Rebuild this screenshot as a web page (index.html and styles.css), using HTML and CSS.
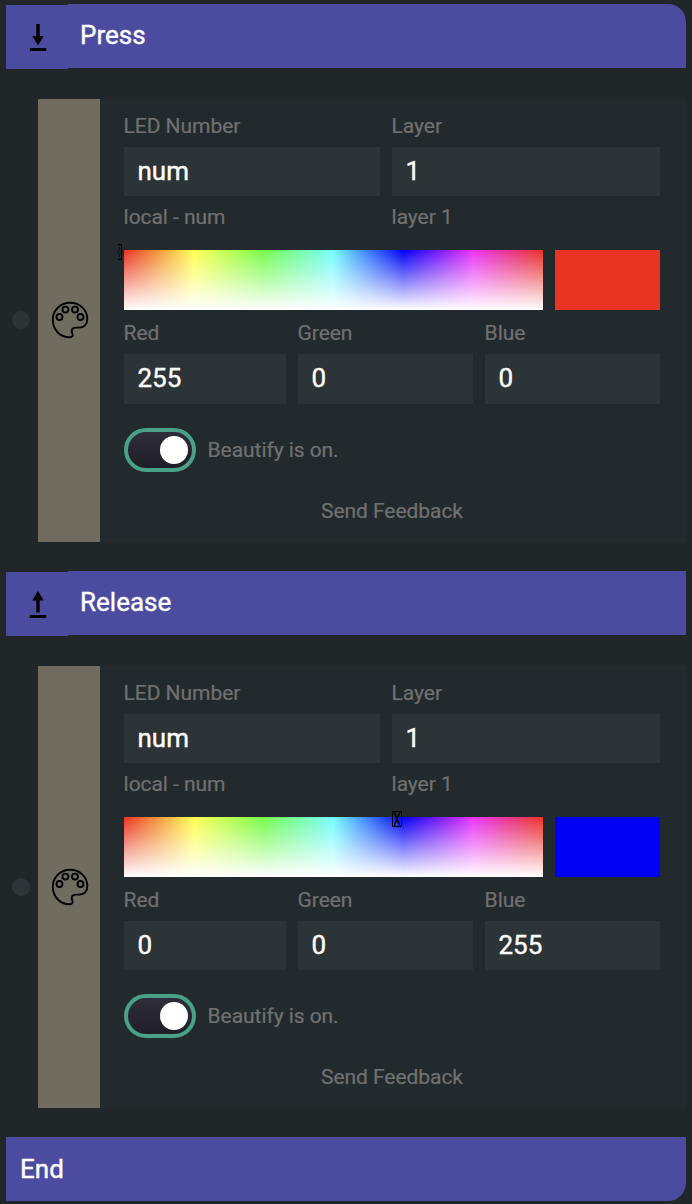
FILE: index.html
```html
<!DOCTYPE html>
<html lang="en">
<head>
<meta charset="utf-8">
<title>Actions</title>
<link rel="stylesheet" href="styles.css">
</head>
<body>
<svg class="defs" width="0" height="0">
  <symbol id="palette" viewBox="0 0 38 38">
    <g fill="none" stroke="#000" stroke-width="1.9">
      <path d="M19 1.800C9.400 1.800 1.800 9.300 1.800 18.500C1.800 28.800 9 36.300 18.500 36.300C21.300 36.300 22.300 34.900 21.200 32.200C19.800 28.800 21.200 26.600 25 26.600H27.500C33.200 26.600 36.300 23.500 36.300 18C36.300 8.500 28.800 1.800 19 1.800Z"/>
      <circle cx="8.500" cy="16" r="3"/><circle cx="14.400" cy="8.600" r="3"/>
      <circle cx="24" cy="8.600" r="3"/><circle cx="29.500" cy="16" r="3"/>
    </g>
  </symbol>
</svg>
<main class="sequence">
  <header class="event event-first">
    <div class="event-icon"><svg width="18" height="28" viewBox="0 0 18 28"><path d="M7.300 0h3.400v12h4L9 21.500 3.300 12h4zM.8 24h16.400v3H.8z"/></svg></div>
    <div class="event-title">Press</div>
  </header>
  <section class="action">
    <div class="handle"><span class="dot"></span></div>
    <div class="kind"><svg width="38" height="38"><use href="#palette"/></svg></div>
    <div class="body">
      <div class="targets">
        <div><div class="label">LED Number</div><div class="input">num</div><div class="label">local - num</div></div>
        <div><div class="label">Layer</div><div class="input">1</div><div class="label">layer 1</div></div>
      </div>
      <div class="picker">
        <div class="spectrum"><svg class="marker marker-start" width="4" height="16" viewBox="0 0 4 16"><path d="M0 .5h3.500v15H0"/><path class="faint" d="M2 2L.5 8 2 14"/></svg></div>
        <div class="swatch red"></div>
      </div>
      <div class="channels">
        <div><div class="label">Red</div><div class="input">255</div></div>
        <div><div class="label">Green</div><div class="input">0</div></div>
        <div><div class="label">Blue</div><div class="input">0</div></div>
      </div>
      <div class="beautify"><span class="toggle"><span class="knob"></span></span><span>Beautify is on.</span></div>
      <div class="feedback">Send Feedback</div>
    </div>
  </section>
  <header class="event">
    <div class="event-icon"><svg width="18" height="28" viewBox="0 0 18 28"><path d="M7.300 21.500h3.400v-12h4L9 0 3.300 9.500h4zM.8 24h16.400v3H.8z"/></svg></div>
    <div class="event-title">Release</div>
  </header>
  <section class="action compact">
    <div class="handle"><span class="dot"></span></div>
    <div class="kind"><svg width="38" height="38"><use href="#palette"/></svg></div>
    <div class="body">
      <div class="targets">
        <div><div class="label">LED Number</div><div class="input">num</div><div class="label">local - num</div></div>
        <div><div class="label">Layer</div><div class="input">1</div><div class="label">layer 1</div></div>
      </div>
      <div class="picker">
        <div class="spectrum"><svg class="marker marker-blue" width="10" height="16" viewBox="0 0 10 16"><path d="M.5.5h9v15h-9z"/><path class="cross" d="M2.200 1.500L7.800 14.500M7.800 1.500L2.200 14.500"/></svg></div>
        <div class="swatch blue"></div>
      </div>
      <div class="channels">
        <div><div class="label">Red</div><div class="input">0</div></div>
        <div><div class="label">Green</div><div class="input">0</div></div>
        <div><div class="label">Blue</div><div class="input">255</div></div>
      </div>
      <div class="beautify"><span class="toggle"><span class="knob"></span></span><span>Beautify is on.</span></div>
      <div class="feedback">Send Feedback</div>
    </div>
  </section>
  <footer class="event event-last"><div class="event-title">End</div></footer>
</main>
</body>
</html>
```
FILE: styles.css
```css
* { box-sizing: border-box; }
body {
  margin: 0;
  height: 1204px;
  overflow: hidden;
  background: #212628;
  color: #fff;
  font-family: Roboto, "Liberation Sans", sans-serif;
  font-size: 21px;
}
svg { display: block; }
.defs { position: absolute; }
.sequence { padding: 4px 6px 0; }
.event { display: flex; height: 64px; }
.event-icon {
  width: 62px;
  height: 64px;
  margin-top: 1px;
  background: #4b4ba0;
  display: flex;
  justify-content: center;
  padding: 19px 0 0 2px;
}
.event-title {
  flex: 1;
  padding-left: 12px;
  background: #4b4ba0;
  font-size: 26px;
  line-height: 63px;
  -webkit-text-stroke: 0.4px #fff;
}
.event-first .event-title { border-top-right-radius: 18px; }
.event-last .event-title { padding-left: 14px; line-height: 65px; border-bottom-right-radius: 18px; }
.action { display: flex; height: 443px; margin: 31px 0 29px; }
.action.compact { height: 442px; }
.handle { width: 32px; display: flex; align-items: center; padding: 0 0 1px 6px; }
.dot { width: 18px; height: 18px; border-radius: 50%; background: #2e3538; }
.kind { width: 62px; background: #706c60; display: flex; align-items: center; justify-content: center; padding: 0 0 1px 2px; }
.compact .handle, .compact .kind { padding-bottom: 0; }
.body { flex: 1; background: #232a2d; padding: 6px 26px 0 24px; color: #717171; letter-spacing: -0.06px; }
.targets { display: grid; grid-template-columns: 256px 268px; gap: 12px; }
.label { height: 42px; line-height: 42px; text-indent: -0.4px; -webkit-text-stroke: 0.2px #717171; }
.input {
  height: 49px;
  padding-left: 13.5px;
  background: #2d3437;
  color: #fff;
  font-size: 26px;
  line-height: 48px;
  letter-spacing: 0;
  -webkit-text-stroke: 0.4px #fff;
}
.picker { display: grid; grid-template-columns: 419px 105px; gap: 12px; height: 60px; margin-top: 12px; }
.spectrum {
  position: relative;
  background:
    linear-gradient(to bottom, rgba(255,255,255,0), #fff),
    linear-gradient(to right, #e93323, #ffff54, #75fb4c, #75fbfd, #0000f5, #ea33f7, #e93323);
}
.marker { position: absolute; top: -6px; fill: none; stroke: #000; stroke-width: 1; }
.marker-start { left: -6px; }
.marker-blue { left: 268px; }
.faint { opacity: 0.6; }
.cross { stroke-width: 1.4; }
.red { background: #e93323; }
.blue { background: #0000f5; }
.channels { display: grid; grid-template-columns: 162px 175px 175px; gap: 12px; }
.channels .label { height: 44px; line-height: 46px; }
.channels .input { height: 50px; }
.compact .channels .input { height: 49px; }
.beautify { display: flex; align-items: center; gap: 11.6px; height: 44px; margin-top: 24px; -webkit-text-stroke: 0.2px #717171; }
.toggle {
  display: flex;
  align-items: center;
  justify-content: flex-end;
  width: 72px;
  height: 44px;
  padding-right: 4px;
  border: 4px solid #49a287;
  border-radius: 22px;
  background: linear-gradient(#2e2d39, #201f27);
}
.knob { width: 28px; height: 28px; border-radius: 50%; background: #fff; }
.feedback { margin-top: 27px; line-height: 24px; text-align: center; -webkit-text-stroke: 0.2px #717171; }
```
